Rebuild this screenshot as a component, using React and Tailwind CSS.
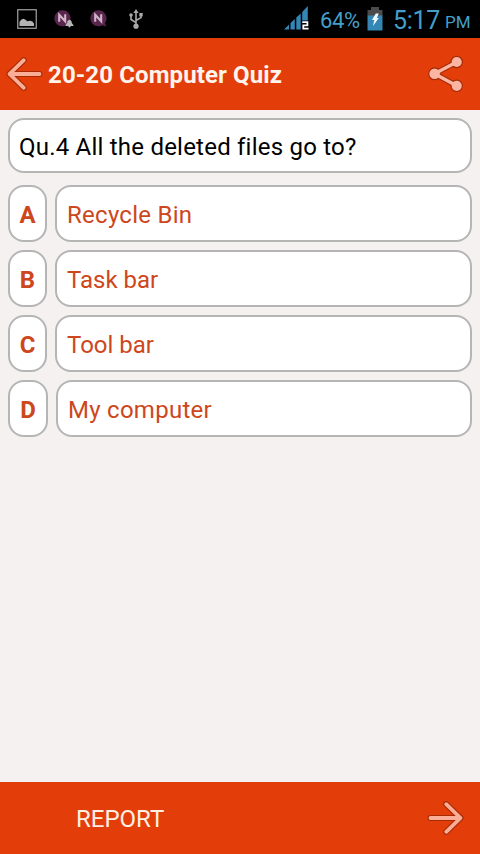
const options = [
  { key: 'A', label: 'Recycle Bin', width: 'w-[39px]', tracking: 'tracking-[0.27px]' },
  { key: 'B', label: 'Task bar', width: 'w-[39px]', tracking: 'tracking-normal' },
  { key: 'C', label: 'Tool bar', width: 'w-[39px]', tracking: 'tracking-normal' },
  { key: 'D', label: 'My computer', width: 'w-[40px]', tracking: 'tracking-[0.27px]' },
];

function PictureIcon() {
  return (
    <svg width="20" height="20" viewBox="0 0 20 20" fill="none">
      <rect x="0.75" y="0.75" width="18.5" height="18.5" stroke="#a4a4a4" strokeWidth="1.2" />
      <path d="M2.5 17v-4.2l2-2.3 2-.8 2 1 1.8 1.6 3-.5 2 .8 1.7 2V17z" fill="#b4b4b4" />
    </svg>
  );
}

function NimbuzzIcon({ bell }) {
  return (
    <svg width="20" height="20" viewBox="0 0 20 20" fill="none">
      <path d="M8.3 1.3a8 8 0 1 0 0 16c1.7 0 3-.4 4.2-1.1l3.8 1.3-1.3-3.6a8 8 0 0 0-6.7-12.6z" fill="#58254d" />
      <path d="M5.2 12.7V5.7l6 6.6V5.3" stroke="#cfb4c8" strokeWidth="2.1" />
      {bell && (
        <path
          d="M15.5 10.8c-1.9.4-2.3 1.8-2.3 3.2l-1.6 2.1v1h2.7c.2 1.8 2.2 1.8 2.4 0h2.7v-1L17.8 14c0-1.4-.4-2.8-2.3-3.2z"
          fill="#b8b8b8"
        />
      )}
    </svg>
  );
}

function UsbIcon() {
  return (
    <svg width="14" height="20" viewBox="0 0 14 20" fill="none">
      <path d="M7 3v13M7 13.7L2 10.5V6M7 11.5l5-2.9V5.5" stroke="#a9a9a9" strokeWidth="1.6" />
      <path d="M7 0l2.6 4H4.4z" fill="#a9a9a9" />
      <circle cx="7" cy="17.2" r="2.6" fill="#a9a9a9" />
      <circle cx="2" cy="6" r="1.8" fill="#a9a9a9" />
      <path d="M10.3 4h3.4v3.4h-3.4z" fill="#a9a9a9" />
    </svg>
  );
}

function SignalIcon() {
  return (
    <svg width="26" height="25" viewBox="0 0 26 25" fill="none">
      <path
        d="M0 24.5h5v-5zM6.5 18v6.5h4.3V14zM12.3 12.5v12h4.4v-16zM18.2 7v17.5h5.6V1z"
        fill="#3486b5"
      />
      <path d="M18.3 17.2h5.1v3.2h-4.1v3.2h5.3" stroke="#000" strokeWidth="3.4" />
      <path d="M18.3 17.2h5.1v3.2h-4.1v3.2h5.3" stroke="#fff" strokeWidth="1.8" />
    </svg>
  );
}

function BatteryIcon() {
  return (
    <svg width="16" height="24" viewBox="0 0 16 24" fill="none">
      <path d="M4 0h8v3h3.5v6H.5V3H4z" fill="#4b4b4b" />
      <path d="M.5 8.5h15V23.5H.5z" fill="#3486b5" />
      <path d="M8.8 6.5h3L9.8 11h2L6 19l1.3-6H5z" fill="#eefaff" />
    </svg>
  );
}

// Dark outline below, light stroke on top
function ArrowIcon({ flip }) {
  const d = 'M4.5 17h30M4.5 17L18.8 3.2M4.5 17l14.3 13.8';
  return (
    <svg
      width="38"
      height="34"
      viewBox="0 0 38 34"
      fill="none"
      strokeLinecap="round"
      className={flip ? 'rotate-180' : ''}
    >
      <path d={d} stroke="#a62b05" strokeWidth="6" />
      <path d={d} stroke="#fbae97" strokeWidth="3.8" />
    </svg>
  );
}

function ShareIcon() {
  return (
    <svg width="36" height="38" viewBox="0 0 36 38" fill="none">
      <path d="M28.7 7L6.5 18.8l22.2 12" stroke="#a62b05" strokeWidth="5.6" />
      <g fill="#fbb5a2" stroke="#a62b05" strokeWidth="1.2">
        <circle cx="28.7" cy="7" r="5.7" />
        <circle cx="6.6" cy="18.8" r="5.9" />
        <circle cx="28.7" cy="30.8" r="5.7" />
      </g>
      <path d="M28.7 7L6.5 18.8l22.2 12" stroke="#fbb5a2" strokeWidth="3.4" />
    </svg>
  );
}

function StatusBar() {
  return (
    <div className="flex h-[38px] items-center bg-black pl-[17px] pr-[10px] text-[#459fc9]">
      <PictureIcon />
      <div className="ml-[17px]">
        <NimbuzzIcon bell />
      </div>
      <div className="ml-4">
        <NimbuzzIcon />
      </div>
      <div className="ml-[19px]">
        <UsbIcon />
      </div>
      <div className="ml-auto -mt-[3px]">
        <SignalIcon />
      </div>
      <span className="ml-[10px] mt-[3px] w-[40px] whitespace-nowrap text-[22px] leading-none tracking-[-0.4px]">
        64%
      </span>
      <div className="ml-[7px]">
        <BatteryIcon />
      </div>
      <span className="ml-[10px] mt-[2px] w-[48px] whitespace-nowrap text-[25px] leading-none tracking-[-0.3px]">
        5:17
      </span>
      <span className="ml-[4px] mt-[7px] w-[25px] whitespace-nowrap text-[17px] leading-none">PM</span>
    </div>
  );
}

export default function App() {
  return (
    <div className="flex h-[854px] w-[480px] flex-col overflow-hidden bg-[#f4f1f0] font-['Roboto',sans-serif]">
      <StatusBar />

      <header className="flex h-[72px] items-center bg-[#e33e0a] pl-[5px] pr-[16px]">
        <ArrowIcon />
        <h1 className="ml-[5px] pt-[2px] text-[24px] font-bold leading-none tracking-[0.12px] text-[#fff4ec]">
          20-20 Computer Quiz
        </h1>
        <div className="ml-auto">
          <ShareIcon />
        </div>
      </header>

      <main className="flex-1 p-2">
        <div className="flex h-[55px] items-center rounded-[16px] border-2 border-[#b5b5b5] bg-white pl-[9px] pt-[2px] text-[24px] leading-none tracking-[0.22px] text-black">
          Qu.4 All the deleted files go to?
        </div>

        <div className="mt-3 flex flex-col gap-2 text-[24px] leading-none text-[#cd471c]">
          {options.map((option) => (
            <div key={option.key} className="flex h-[57px] gap-2">
              <div
                className={`flex shrink-0 items-center justify-center rounded-[16px] border-2 border-[#b5b5b5] bg-white pt-[2px] font-bold ${option.width}`}
              >
                {option.key}
              </div>
              <div
                className={`flex flex-1 items-center rounded-[16px] border-2 border-[#b5b5b5] bg-white pl-[10px] pt-[2px] ${option.tracking}`}
              >
                {option.label}
              </div>
            </div>
          ))}
        </div>
      </main>

      <footer className="flex h-[72px] items-center justify-between bg-[#e33e0a] pl-[76px] pr-[15px]">
        <span className="pt-[2px] text-[24px] leading-none text-[#ffefe2]">REPORT</span>
        <ArrowIcon flip />
      </footer>
    </div>
  );
}
